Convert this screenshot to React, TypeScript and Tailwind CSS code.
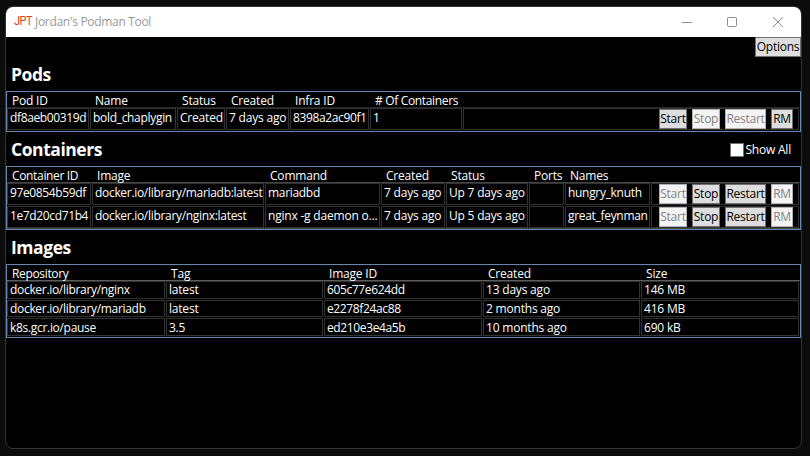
import React from "react";

const btnBase = "flex h-5 shrink-0 justify-center border text-[12px] leading-[18px] tracking-[-0.25px] whitespace-nowrap";

function Button({ label, w, disabled = false }: { label: string; w: string; disabled?: boolean }) {
  return (
    <button
      disabled={disabled}
      className={`${btnBase} ${w} ${disabled ? "border-[#adb2b5] bg-[#f4f4f4] text-[#838383]" : "border-[#707070] bg-[#dddddd] text-black"}`}
    >
      {label}
    </button>
  );
}

function Actions({ start, stop, restart, rm }: { start: boolean; stop: boolean; restart: boolean; rm: boolean }) {
  return (
    <div className="flex justify-end gap-[5px] pr-[5px]">
      <Button label="Start" w="w-7" disabled={!start} />
      <Button label="Stop" w="w-7" disabled={!stop} />
      <Button label="Restart" w="w-[41px]" disabled={!restart} />
      <Button label="RM" w="w-[22px]" disabled={!rm} />
    </div>
  );
}

const podCols = [
  ["Pod ID", "w-[82px]"],
  ["Name", "w-[86px]"],
  ["Status", "w-12"],
  ["Created", "w-[63px]"],
  ["Infra ID", "w-[79px]"],
  ["# Of Containers", "w-[92px]"],
  ["", "w-[336px]"],
];
const containerCols = [
  ["Container ID", "w-[84px]"],
  ["Image", "w-[172px]"],
  ["Command", "w-[115px]"],
  ["Created", "w-16"],
  ["Status", "w-[82px]"],
  ["Ports", "w-[35px]"],
  ["Names", "w-[85px]"],
  ["", "w-[148px]"],
];
const imageCols = [
  ["Repository", "w-[158px]"],
  ["Tag", "w-[157px]"],
  ["Image ID", "w-[158px]"],
  ["Created", "w-[157px]"],
  ["Size", "w-[158px]"],
];

// Hash ids are set tighter than words; relative times slightly looser.
function tracking(text: string) {
  if (/^[0-9a-f]{12}$/.test(text)) return "tracking-[-0.37px]";
  if (/ago$|^Created$|^latest$|B$|^nginx -g/.test(text)) return "tracking-[-0.2px]";
  return "tracking-[-0.31px]";
}

function Header({ cols, line }: { cols: string[][]; line: string }) {
  return (
    <div className={`flex h-4 shrink-0 gap-px border-b leading-[17px] ${line}`}>
      {cols.map(([name, w], i) => (
        <div key={i} className={`${w} shrink-0 whitespace-nowrap pl-[5px] ${name.length > 9 ? "tracking-[-0.34px]" : ""}`}>{name}</div>
      ))}
    </div>
  );
}

function Row({ cols, cells, h, textClass }: { cols: string[][]; cells: React.ReactNode[]; h: string; textClass: string }) {
  return (
    <div className={`flex gap-px ${h}`}>
      {cols.map(([, w], i) => {
        const cell = cells[i];
        return (
          <div key={i} className={`${w} shrink-0 border border-[#333333] whitespace-nowrap`}>
            {typeof cell === "string" ? <div className={`pl-[2px] ${textClass} ${tracking(cell)}`}>{cell}</div> : cell}
          </div>
        );
      })}
    </div>
  );
}

function Heading({ children }: { children: React.ReactNode }) {
  return <h2 className="pl-[5px] text-[17.5px] font-bold leading-[22px] tracking-[-0.45px]">{children}</h2>;
}

const tableBase = "border border-[#6688b0]";

export default function App() {
  return (
    <div className="h-[456px] w-[810px] overflow-hidden bg-[#0c0c0c] pl-[5px] pt-[6px] font-['Open_Sans','Noto_Sans',sans-serif] text-[12px] tracking-[-0.2px] text-white">
      <div className="h-[443px] w-[797px] overflow-hidden rounded-lg border border-[#333333] bg-black">
        <div className="flex h-[30px] items-center bg-white">
          <span className="ml-[8px] w-[21px] origin-left scale-x-[0.88] pb-[2px] font-[Roboto,sans-serif] text-[12.5px] leading-[28px] tracking-[-0.6px] text-[#e83a1c]">JPT</span>
          <span className="pb-px text-[12px] tracking-[-0.31px] text-[#999999]">Jordan's Podman Tool</span>
          <svg className="ml-auto mr-[16px] mb-px shrink-0" width="103" height="12" viewBox="0 0 103 12" fill="none" stroke="#8c8c8c">
            <path d="M0 6.5H10" />
            <rect x="45.5" y="1.5" width="9" height="9" rx="1" />
            <path d="M91 1L101 11M101 1L91 11" />
          </svg>
        </div>
        <div className="flex h-[26px] justify-end">
          <Button label="Options" w="w-[46px]" />
        </div>
        <div className="h-7"><Heading>Pods</Heading></div>
        <div className={`h-[41px] ${tableBase}`}>
          <Header cols={podCols} line="border-[#262626]" />
          <Row
            cols={podCols}
            h="h-[22px]"
            textClass="leading-[18px]"
            cells={["df8aeb00319d", "bold_chaplygin", "Created", "7 days ago", "8398a2ac90f1", "1", <Actions start stop={false} restart={false} rm />]}
          />
        </div>
        <div className="flex h-[34px] justify-between pt-1.5">
          <Heading>Containers</Heading>
          <label className="flex h-6 items-center pr-[10px]">
            <span className="mr-px size-[14px] border border-[#707070] bg-white" />
            <span className="leading-4">Show All</span>
          </label>
        </div>
        <div className={`h-16 ${tableBase}`}>
          <Header cols={containerCols} line="border-[#444444]" />
          <div className="flex flex-col gap-px border-b border-[#444444]">
            <Row
              cols={containerCols}
              h="h-[22px]"
              textClass="leading-[18px]"
              cells={["97e0854b59df", "docker.io/library/mariadb:latest", "mariadbd", "7 days ago", "Up 7 days ago", "", "hungry_knuth", <Actions start={false} stop restart rm={false} />]}
            />
            <Row
              cols={containerCols}
              h="h-[22px]"
              textClass="leading-[18px]"
              cells={["1e7d20cd71b4", "docker.io/library/nginx:latest", "nginx -g daemon o...", "7 days ago", "Up 5 days ago", "", "great_feynman", <Actions start={false} stop restart rm={false} />]}
            />
          </div>
        </div>
        <div className="h-[34px] pt-1.5"><Heading>Images</Heading></div>
        <div className={`flex h-[74px] flex-col ${tableBase}`}>
          <Header cols={imageCols} line="border-[#5c5c5c]" />
          <div className="flex flex-col gap-px">
            <Row cols={imageCols} h="h-[18px]" textClass="leading-4" cells={["docker.io/library/nginx", "latest", "605c77e624dd", "13 days ago", "146 MB"]} />
            <Row cols={imageCols} h="h-[17px]" textClass="leading-4" cells={["docker.io/library/mariadb", "latest", "e2278f24ac88", "2 months ago", "416 MB"]} />
            <Row cols={imageCols} h="h-[18px]" textClass="leading-[18px]" cells={["k8s.gcr.io/pause", "3.5", "ed210e3e4a5b", "10 months ago", "690 kB"]} />
          </div>
        </div>
      </div>
    </div>
  );
}
